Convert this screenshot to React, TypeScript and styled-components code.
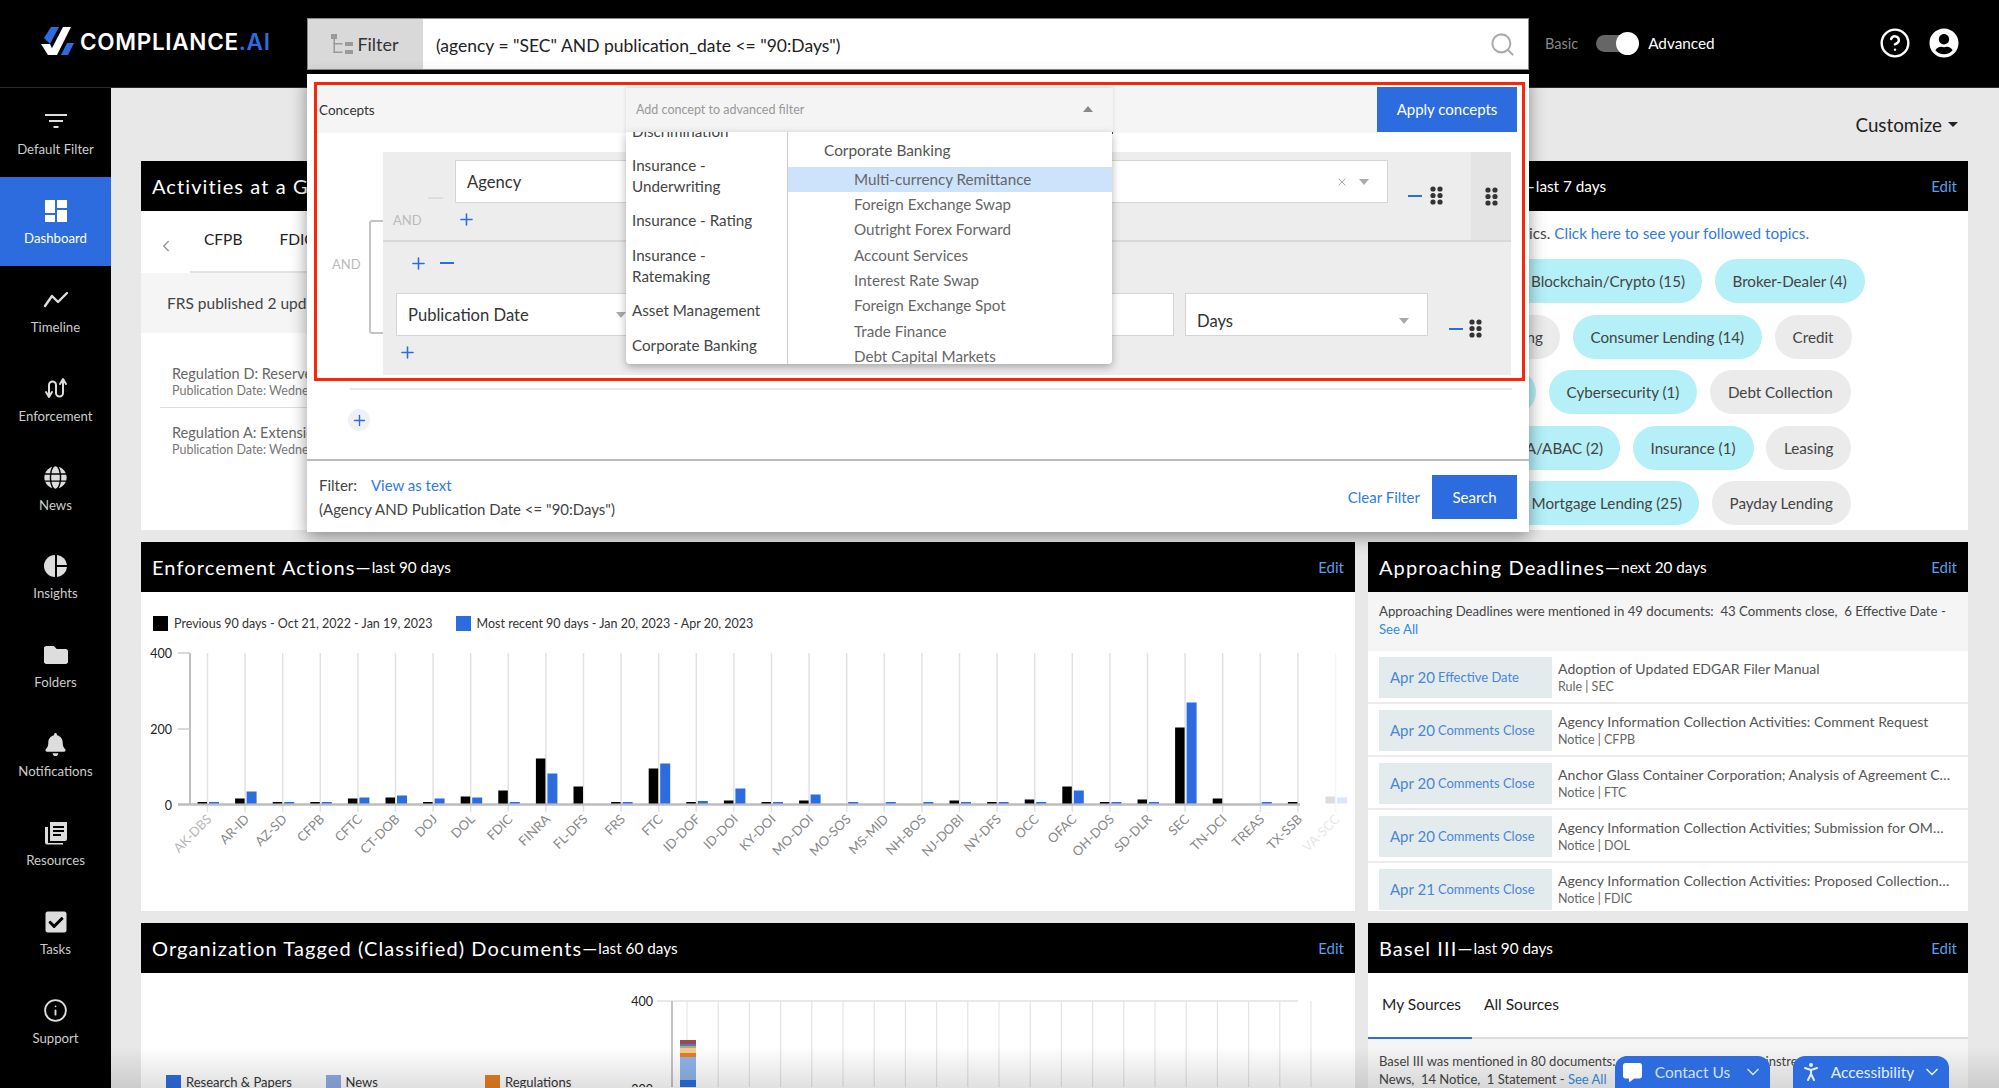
import styled, { createGlobalStyle } from 'styled-components'
import { ChevronDown, ChevronLeft, CircleHelp, Info, PersonStanding, Plus, Search, X } from 'lucide-react'
import { FaBell, FaCheckSquare, FaCommentAlt, FaFolder, FaGlobe, FaUserCircle } from 'react-icons/fa'

const BLUE = '#2d6cdf'
const LINK = '#2f7be6'

const GlobalStyle = createGlobalStyle`
	html, body {
		margin: 0;
		height: 100%;
		overflow: hidden;
		background: #e8e8e8;
		font-family: Lato, "Noto Sans", sans-serif;
		color: #333;
	}
	* { box-sizing: border-box; }
`

/* ---------- icons ---------- */

const LogoMark = () => (
	<svg width="33" height="29" viewBox="0 0 33 29">
		<polygon points="10,0 18,0 9,17 3,11" fill={BLUE} />
		<polygon points="22,0 30,0 16,28 14,28 10,23" fill="#fff" />
		<polygon points="0,17 9,17 14,28 7,28" fill="#fff" />
		<polygon points="26,16 33,16 27,28 20,28" fill={BLUE} />
	</svg>
)

const FilterTree = () => (
	<svg width="24" height="24" viewBox="0 0 24 24" fill="#9a9a9a">
		<rect x="1" y="2" width="6" height="5" />
		<rect x="15" y="10" width="8" height="4" />
		<rect x="15" y="18" width="8" height="4" />
		<rect x="3.5" y="7" width="1.5" height="14" />
		<rect x="3.5" y="11" width="9" height="1.5" />
		<rect x="3.5" y="19.5" width="9" height="1.5" />
	</svg>
)

const Grip = () => (
	<svg width="13" height="19" viewBox="0 0 13 19" fill="#333">
		{[3, 9.5, 16].map(y => [3, 10].map(x => <circle key={`${x}-${y}`} cx={x} cy={y} r="2.6" />))}
	</svg>
)

const FilterLines = () => (
	<svg width="24" height="20" viewBox="0 0 24 20" stroke="#ddd" strokeWidth="2">
		<line x1="1" y1="3" x2="23" y2="3" />
		<line x1="5" y1="9" x2="19" y2="9" />
		<line x1="9.5" y1="15" x2="14.5" y2="15" />
	</svg>
)

const DashboardIcon = () => (
	<svg width="24" height="24" viewBox="0 0 24 24" fill="#fff">
		<rect x="1" y="1" width="10" height="13" />
		<rect x="13" y="1" width="10" height="8" />
		<rect x="1" y="16" width="10" height="7" />
		<rect x="13" y="11" width="10" height="12" />
	</svg>
)

const TimelineIcon = () => (
	<svg width="28" height="20" viewBox="0 0 28 20" fill="none" stroke="#ddd" strokeWidth="2.4" strokeLinecap="round" strokeLinejoin="round">
		<polyline points="3,16 10,6 16,12 25,3" />
	</svg>
)

const EnforcementIcon = () => (
	<svg width="24" height="24" viewBox="0 0 24 24" fill="none" stroke="#ddd" strokeWidth="2" strokeLinecap="round" strokeLinejoin="round">
		<path d="M5 18V8a3.5 3.5 0 0 1 7 0v8a3.5 3.5 0 0 0 7 0V4" />
		<polyline points="2,15 5,20 8,15" />
		<polyline points="16,7 19,2 22,7" />
	</svg>
)

const PieIcon = () => (
	<svg width="24" height="24" viewBox="0 0 24 24" fill="#ddd">
		<path d="M11 1a11 11 0 0 0 0 22z" />
		<path d="M13 1a11 11 0 0 1 10 10H13z" />
		<path d="M13 13h10a11 11 0 0 1-10 10z" />
	</svg>
)

const ResourcesIcon = () => (
	<svg width="24" height="24" viewBox="0 0 24 24" fill="#ddd">
		<path d="M6 1h17v17a2 2 0 0 1-2 2H6zM9 5v2h11V5zm0 4v2h11V9zm0 4v2h8v-2z" fillRule="evenodd" />
		<path d="M1 6h3v16h15v1.500H3a2 2 0 0 1-2-2z" />
	</svg>
)

/* ---------- data ---------- */

const navItems = [
	{ label: 'Default Filter', icon: <FilterLines /> },
	{ label: 'Dashboard', icon: <DashboardIcon />, active: true },
	{ label: 'Timeline', icon: <TimelineIcon /> },
	{ label: 'Enforcement', icon: <EnforcementIcon /> },
	{ label: 'News', icon: <FaGlobe size={23} /> },
	{ label: 'Insights', icon: <PieIcon /> },
	{ label: 'Folders', icon: <FaFolder size={24} /> },
	{ label: 'Notifications', icon: <FaBell size={23} /> },
	{ label: 'Resources', icon: <ResourcesIcon /> },
	{ label: 'Tasks', icon: <FaCheckSquare size={24} /> },
	{ label: 'Support', icon: <Info size={25} strokeWidth={1.8} /> },
]

const enforcement: [string, number, number][] = [
	['AK-DBS', 1.5, 1.5], ['AR-ID', 5, 12], ['AZ-SD', 1.5, 1.5], ['CFPB', 1.5, 1.5], ['CFTC', 5, 6],
	['CT-DOB', 6, 8], ['DOJ', 1.5, 5], ['DOL', 7, 6], ['FDIC', 13, 1.5], ['FINRA', 45, 30],
	['FL-DFS', 17, 0], ['FRS', 1.5, 1.5], ['FTC', 35, 40], ['ID-DOF', 1.5, 2.5], ['ID-DOI', 3, 15],
	['KY-DOI', 1.5, 1.5], ['MO-DOI', 3, 9], ['MO-SOS', 0, 1.5], ['MS-MID', 0, 1.5], ['NH-BOS', 0, 1.5],
	['NJ-DOBI', 3, 1.5], ['NY-DFS', 1.5, 1.5], ['OCC', 4, 1.5], ['OFAC', 17, 13], ['OH-DOS', 1.5, 1.5],
	['SD-DLR', 4, 1.5], ['SEC', 76, 101], ['TN-DCI', 5, 0], ['TREAS', 0, 1.5], ['TX-SSB', 1.5, 0],
	['VA-SCC', 7, 6],
]

const deadlines = [
	{ date: 'Apr 20', kind: 'Effective Date', title: 'Adoption of Updated EDGAR Filer Manual', meta: 'Rule | SEC' },
	{ date: 'Apr 20', kind: 'Comments Close', title: 'Agency Information Collection Activities: Comment Request', meta: 'Notice | CFPB' },
	{ date: 'Apr 20', kind: 'Comments Close', title: 'Anchor Glass Container Corporation; Analysis of Agreement Containing Consent Orders', meta: 'Notice | FTC' },
	{ date: 'Apr 20', kind: 'Comments Close', title: 'Agency Information Collection Activities; Submission for OMB Review of Revised Forms', meta: 'Notice | DOL' },
	{ date: 'Apr 21', kind: 'Comments Close', title: 'Agency Information Collection Activities: Proposed Collection Renewal', meta: 'Notice | FDIC' },
]

const pillRows: { lead: string; leadWidth: number; leadGray?: boolean; rest: { label: string; gray?: boolean }[] }[] = [
	{ lead: 'Blockchain/Crypto (15)', leadWidth: 323, rest: [{ label: 'Broker-Dealer (4)' }] },
	{ lead: 'Community Banking', leadWidth: 181, leadGray: true, rest: [{ label: 'Consumer Lending (14)' }, { label: 'Credit', gray: true }] },
	{ lead: 'Crowdfunding (2)', leadWidth: 157, rest: [{ label: 'Cybersecurity (1)' }, { label: 'Debt Collection', gray: true }] },
	{ lead: 'FCPA/ABAC (2)', leadWidth: 241, rest: [{ label: 'Insurance (1)' }, { label: 'Leasing', gray: true }] },
	{ lead: 'Mortgage Lending (25)', leadWidth: 320, rest: [{ label: 'Payday Lending', gray: true }] },
]

const leftConcepts = ['Discrimination', 'Insurance - Underwriting', 'Insurance - Rating', 'Insurance - Ratemaking', 'Asset Management', 'Corporate Banking']
const rightConcepts = ['Multi-currency Remittance', 'Foreign Exchange Swap', 'Outright Forex Forward', 'Account Services', 'Interest Rate Swap', 'Foreign Exchange Spot', 'Trade Finance', 'Debt Capital Markets']

/* ---------- charts ---------- */

const EnforcementChart = () => {
	const base = 804
	return (
		<svg width="1214" height="273" viewBox="141 640 1214 273">
			{enforcement.map((_, i) => {
				const x = 207.5 + 37.6 * i
				return <line key={i} x1={x} x2={x} y1="653" y2="812" stroke="#e2e2e2" strokeWidth="1.5" opacity={i === 30 ? 0.3 : 1} />
			})}
			<line x1="190" x2="190" y1="653" y2="805" stroke="#bdbdbd" strokeWidth="2" />
			<line x1="178" x2="190" y1="653" y2="653" stroke="#ccc" strokeWidth="1.5" />
			<line x1="178" x2="190" y1="729" y2="729" stroke="#ccc" strokeWidth="1.5" />
			<line x1="178" x2="1300" y1="804.5" y2="804.5" stroke="#bdbdbd" strokeWidth="2.5" />
			<text x="172" y="658" textAnchor="end" fontSize="12.5" fill="#222">400</text>
			<text x="172" y="734" textAnchor="end" fontSize="12.5" fill="#222">200</text>
			<text x="172" y="810" textAnchor="end" fontSize="12.5" fill="#222">0</text>
			{enforcement.map(([name, black, blue], i) => {
				const x = 207.5 + 37.6 * i
				const faded = i === 30
				return (
					<g key={name}>
						{black > 0 && <rect x={x - 10} y={base - 0.5 - black} width="9.500" height={black} fill={faded ? '#ddd' : '#000'} />}
						{blue > 0 && <rect x={x + 1.5} y={base - 0.5 - blue} width="10" height={blue} fill={faded ? '#dbe6fa' : BLUE} />}
						<text
							x={x + 5}
							y="820"
							textAnchor="end"
							fontSize="13"
							fill="#888"
							opacity={faded ? 0.2 : i === 0 ? 0.6 : 1}
							transform={`rotate(-45 ${x + 5} 820)`}
						>
							{name}
						</text>
					</g>
				)
			})}
		</svg>
	)
}

const TaggedChart = () => {
	const segs: [number, number, string][] = [
		[1041, 4, '#8f4f4f'], [1045, 2, '#8e5bc0'], [1047, 2, '#7cc47c'], [1049, 5, '#fbc58e'],
		[1054, 4, '#e67e22'], [1058, 23, '#8fb3ea'], [1081, 7, BLUE],
	]
	return (
		<svg width="734" height="114" viewBox="621 974 734 114">
			<line x1="657" x2="1298" y1="1002" y2="1002" stroke="#e9e9e9" strokeWidth="2" />
			{Array.from({ length: 21 }, (_, i) => (
				<line key={i} x1={687 + 31.2 * i} x2={687 + 31.2 * i} y1="1002" y2="1088" stroke="#e4e4e4" strokeWidth="1.2" />
			))}
			<line x1="672" x2="672" y1="1002" y2="1088" stroke="#c4c4c4" strokeWidth="2" />
			<text x="653" y="1007" textAnchor="end" fontSize="12.5" fill="#222">400</text>
			<text x="653" y="1095" textAnchor="end" fontSize="12.5" fill="#222">200</text>
			{segs.map(([y, h, c]) => <rect key={y} x="680" y={y} width="16" height={h} fill={c} />)}
		</svg>
	)
}

/* ---------- component ---------- */

const App = () => {
	return (
		<Page>
			<GlobalStyle />
			<Header>
				<Logo>
					<LogoMark />
					<LogoText>COMPLIANCE<span>.AI</span></LogoText>
				</Logo>
				<SearchWrap>
					<SearchBar>
						<FilterButton><FilterTree />Filter</FilterButton>
						<Query>(agency = "SEC" AND publication_date &lt;= "90:Days")</Query>
						<Search size={27} color="#aaa" strokeWidth={1.8} />
					</SearchBar>
					<FilterPanel>
						<RedFrame>
							<ConceptBar>
								<ConceptLabel>Concepts</ConceptLabel>
								<ConceptSelect>
									Add concept to advanced filter
									<TriUp />
									<ConceptMenu>
										<LeftList>
											<LeftInner>
												{leftConcepts.map(c => <LeftItem key={c}>{c}</LeftItem>)}
											</LeftInner>
										</LeftList>
										<RightList>
											<RightHeading>Corporate Banking</RightHeading>
											{rightConcepts.map((c, i) => <RightItem key={c} $active={i === 0}>{c}</RightItem>)}
										</RightList>
									</ConceptMenu>
								</ConceptSelect>
								<ApplyButton>Apply concepts</ApplyButton>
							</ConceptBar>
							<Builder>
								<AndColumn>
									<OuterAnd>AND</OuterAnd>
									<Bracket />
								</AndColumn>
								<OuterGroup>
									<AgencyGroup>
										<AgencyMain>
											<AgencyRow>
												<FaintDash />
												<FieldBox $width={933}>
													Agency
													<SelectEnd>
														<X size={12} color="#aaa" />
														<TriDown />
													</SelectEnd>
												</FieldBox>
												<RowTools><MinusMark /><Grip /></RowTools>
											</AgencyRow>
											<SubRow>
												<InnerAnd>AND</InnerAnd>
												<Plus size={19} color={BLUE} strokeWidth={2} />
											</SubRow>
										</AgencyMain>
										<Handle><Grip /></Handle>
									</AgencyGroup>
									<DateGroup>
										<AddRow>
											<Plus size={19} color={BLUE} strokeWidth={2} />
											<MinusMark />
										</AddRow>
										<DateRow>
											<FieldBox $width={249}>
												Publication Date
												<SelectEnd><TriDown /></SelectEnd>
											</FieldBox>
											<FieldBox $width={518} />
											<FieldBox $width={243} $low>
												Days
												<SelectEnd><TriDown /></SelectEnd>
											</FieldBox>
											<RowTools><MinusMark /><Grip /></RowTools>
										</DateRow>
										<LastPlus><Plus size={19} color={BLUE} strokeWidth={2} /></LastPlus>
									</DateGroup>
								</OuterGroup>
							</Builder>
						</RedFrame>
						<AddZone>
							<RoundPlus><Plus size={17} color={BLUE} strokeWidth={2} /></RoundPlus>
						</AddZone>
						<PanelFooter>
							<FilterSummary>
								<div>Filter: <ViewLink>View as text</ViewLink></div>
								<div>(Agency AND Publication Date &lt;= "90:Days")</div>
							</FilterSummary>
							<ClearLink>Clear Filter</ClearLink>
							<SearchButton>Search</SearchButton>
						</PanelFooter>
					</FilterPanel>
				</SearchWrap>
				<ModeSwitch>
					<ModeLabel>Basic</ModeLabel>
					<Toggle><Knob /></Toggle>
					<ModeLabel $on>Advanced</ModeLabel>
				</ModeSwitch>
				<HeaderIcons>
					<CircleHelp size={32} strokeWidth={1.8} color="#fff" />
					<FaUserCircle size={30} color="#fff" />
				</HeaderIcons>
			</Header>
			<Body>
				<Sidebar>
					{navItems.map(item => (
						<NavItem key={item.label} $active={item.active}>
							<NavIcon>{item.icon}</NavIcon>
							{item.label}
						</NavItem>
					))}
				</Sidebar>
				<Main>
					<CustomizeRow>Customize<Caret /></CustomizeRow>
					<Cards>
						<Card>
							<CardHeader>
								<CardTitle>Activities at a Glance</CardTitle>
							</CardHeader>
							<TabsRow>
								<TabArrow><ChevronLeft size={18} color="#999" /></TabArrow>
								<TabsLine>
									<GlanceTab>CFPB</GlanceTab>
									<GlanceTab>FDIC</GlanceTab>
								</TabsLine>
							</TabsRow>
							<GlanceIntro>FRS published 2 updates in the last 7 days</GlanceIntro>
							<GlanceItem>
								<GlanceTitle>Regulation D: Reserve Requirements of Depository Institutions</GlanceTitle>
								<GlanceDate>Publication Date: Wednesday, April 12, 2023</GlanceDate>
							</GlanceItem>
							<GlanceItem>
								<GlanceTitle>Regulation A: Extensions of Credit by Federal Reserve Banks</GlanceTitle>
								<GlanceDate>Publication Date: Wednesday, April 5, 2023</GlanceDate>
							</GlanceItem>
						</Card>
						<Card>
							<CardHeader>
								<CardTitle>News by Topic</CardTitle>
								<Dash>—</Dash>
								<CardSub>last 7 days</CardSub>
								<EditLink>Edit</EditLink>
							</CardHeader>
							<TopicsIntro>Showing news across your topics. <TopicLink>Click here to see your followed topics.</TopicLink></TopicsIntro>
							<PillStack>
								{pillRows.map(row => (
									<PillRow key={row.lead}>
										<Pill $gray={row.leadGray} $width={row.leadWidth}>{row.lead}</Pill>
										{row.rest.map(p => <Pill key={p.label} $gray={p.gray}>{p.label}</Pill>)}
									</PillRow>
								))}
							</PillStack>
						</Card>
						<Card>
							<CardHeader>
								<CardTitle>Enforcement Actions</CardTitle>
								<Dash>—</Dash>
								<CardSub>last 90 days</CardSub>
								<EditLink>Edit</EditLink>
							</CardHeader>
							<ChartLegend>
								<LegendEntry><Swatch $color="#000" />Previous 90 days - Oct 21, 2022 - Jan 19, 2023</LegendEntry>
								<LegendEntry><Swatch $color={BLUE} />Most recent 90 days - Jan 20, 2023 - Apr 20, 2023</LegendEntry>
							</ChartLegend>
							<EnforcementChart />
						</Card>
						<Card>
							<CardHeader>
								<CardTitle>Approaching Deadlines</CardTitle>
								<Dash>—</Dash>
								<CardSub>next 20 days</CardSub>
								<EditLink>Edit</EditLink>
							</CardHeader>
							<DeadlineIntro>
								Approaching Deadlines were mentioned in 49 documents:&nbsp; 43 Comments close,&nbsp; 6 Effective Date -<br />
								<SeeAll>See All</SeeAll>
							</DeadlineIntro>
							{deadlines.map(d => (
								<DeadlineRow key={d.title}>
									<DateBox>
										<DateDay>{d.date}</DateDay>
										<DateKind>{d.kind}</DateKind>
									</DateBox>
									<DeadlineInfo>
										<DeadlineTitle>{d.title}</DeadlineTitle>
										<DeadlineMeta>{d.meta}</DeadlineMeta>
									</DeadlineInfo>
								</DeadlineRow>
							))}
						</Card>
						<Card>
							<CardHeader>
								<CardTitle>Organization Tagged (Classified) Documents</CardTitle>
								<Dash>—</Dash>
								<CardSub>last 60 days</CardSub>
								<EditLink>Edit</EditLink>
							</CardHeader>
							<TaggedBody>
								<TaggedLegend>
									<TaggedEntry><Swatch $color={BLUE} />Research &amp; Papers</TaggedEntry>
									<TaggedEntry><Swatch $color="#8fabe3" />News</TaggedEntry>
									<TaggedEntry><Swatch $color="#e67e22" />Regulations</TaggedEntry>
								</TaggedLegend>
								<TaggedChart />
							</TaggedBody>
						</Card>
						<Card>
							<CardHeader>
								<CardTitle>Basel III</CardTitle>
								<Dash>—</Dash>
								<CardSub>last 90 days</CardSub>
								<EditLink>Edit</EditLink>
							</CardHeader>
							<SourceTabs>
								<SourceTab $active>My Sources</SourceTab>
								<SourceTab>All Sources</SourceTab>
							</SourceTabs>
							<BaselText>
								Basel III was mentioned in 80 documents:&nbsp; 18 Enforcements,&nbsp; 21 Mainstream Media,&nbsp; 44<br />
								News,&nbsp; 14 Notice,&nbsp; 1 Statement - <SeeAll>See All</SeeAll>
							</BaselText>
						</Card>
					</Cards>
				</Main>
			</Body>
			<BottomFade />
			<Widgets>
				<ContactWidget>
					<FaCommentAlt size={19} color="#fff" />
					<span>Contact Us</span>
					<ChevronDown size={20} />
				</ContactWidget>
				<AccessWidget>
					<PersonStanding size={24} />
					<span>Accessibility</span>
					<ChevronDown size={20} />
				</AccessWidget>
			</Widgets>
		</Page>
	)
}

export default App

const Page = styled.div`
	position: relative;
	width: 100%;
	height: 100vh;
	overflow: hidden;
	display: flex;
	flex-direction: column;
`

const Header = styled.header`
	position: relative;
	z-index: 5;
	flex: none;
	height: 88px;
	background: #000;
	padding-top: 18px;
	display: flex;
	align-items: flex-start;
	border-bottom: 1px solid #2a2a2a;
`

const Logo = styled.div`
	width: 307px;
	height: 47px;
	padding-left: 41px;
	display: flex;
	align-items: center;
	gap: 6px;
`

const LogoText = styled.div`
	font-family: Inter, sans-serif;
	font-weight: 600;
	font-size: 22.5px;
	letter-spacing: 0.7px;
	color: #fff;
	span { color: ${BLUE}; }
`

const SearchWrap = styled.div`
	position: relative;
	width: 1222px;
`

const SearchBar = styled.div`
	height: 52px;
	background: #fff;
	display: flex;
	align-items: center;
	padding-right: 12px;
	border: 1px solid #888;
`

const FilterButton = styled.div`
	width: 115px;
	height: 100%;
	padding-right: 2px;
	background: #d9d9d9;
	display: flex;
	align-items: center;
	justify-content: center;
	gap: 3px;
	font-size: 18px;
	color: #333;
`

const Query = styled.div`
	flex: 1;
	padding: 3px 0 0 13px;
	font-size: 17.5px;
	color: #222;
`

const FilterPanel = styled.div`
	position: absolute;
	left: 0;
	top: 56px;
	width: 100%;
	height: 458px;
	background: #fff;
	box-shadow: 0 5px 16px rgba(0, 0, 0, 0.4);
	padding-top: 8px;
`

const RedFrame = styled.div`
	margin: 0 4px 0 7px;
	height: 299px;
	border: 3px solid #f9260a;
	padding: 2px 5px 0 0;
`

const ConceptBar = styled.div`
	height: 46px;
	background: #f5f5f5;
	display: flex;
	align-items: center;
	font-size: 13.5px;
`

const ConceptLabel = styled.div`
	width: 309px;
	padding-left: 2px;
	color: #333;
`

const ConceptSelect = styled.div`
	position: relative;
	width: 487px;
	height: 46px;
	margin-top: 1px;
	background: #f4f4f4;
	border-bottom: 2px solid #444;
	box-shadow: 0 -1px 4px rgba(0, 0, 0, 0.12);
	padding-left: 10px;
	display: flex;
	align-items: center;
	font-size: 12.500px;
	color: #999;
`

const TriUp = styled.i`
	position: absolute;
	right: 20px;
	top: 18px;
	border: 5px solid transparent;
	border-top: 0;
	border-bottom: 6px solid #888;
`

const ConceptMenu = styled.div`
	position: absolute;
	left: 0;
	top: 100%;
	width: 486px;
	height: 232px;
	background: #fff;
	border-radius: 0 0 4px 4px;
	box-shadow: 0 3px 8px rgba(0, 0, 0, 0.3);
	display: flex;
	overflow: hidden;
	z-index: 3;
`

const LeftList = styled.div`
	width: 162px;
	flex: none;
	overflow: hidden;
	border-right: 1px solid #ccc;
	padding: 0 14px 0 6px;
`

const LeftInner = styled.div`
	margin-top: -11px;
	display: flex;
	flex-direction: column;
	gap: 14.2px;
`

const LeftItem = styled.div`
	font-size: 15.2px;
	line-height: 20.5px;
	color: #444;
`

const RightList = styled.div`
	flex: 1;
	padding-top: 5px;
	overflow: hidden;
`

const RightHeading = styled.div`
	height: 26px;
	margin-bottom: 4px;
	padding-left: 36px;
	font-size: 15.4px;
	line-height: 26px;
	color: #555;
`

const RightItem = styled.div<{ $active?: boolean }>`
	height: 25.4px;
	padding-left: 66px;
	font-size: 15.2px;
	line-height: 25.4px;
	color: #666;
	background: ${p => (p.$active ? '#cde3fb' : 'transparent')};
`

const ApplyButton = styled.button`
	margin-left: auto;
	width: 140px;
	height: 45px;
	margin-top: -2px;
	border: 0;
	background: ${BLUE};
	color: #fff;
	font: 15px Lato, sans-serif;
`

const Builder = styled.div`
	display: flex;
	margin: 19px 6px 0 0;
`

const AndColumn = styled.div`
	width: 66px;
	height: 223px;
	flex: none;
	display: flex;
`

const OuterAnd = styled.div`
	flex: 1;
	align-self: center;
	padding-left: 15px;
	font-size: 13px;
	color: #bbb;
`

const Bracket = styled.div`
	width: 14px;
	height: 114px;
	margin-top: 68px;
	border: 2px solid #c4c4c4;
	border-right: 0;
	border-radius: 3px 0 0 3px;
`

const OuterGroup = styled.div`
	flex: 1;
	height: 223px;
	background: #ededed;
`

const AgencyGroup = styled.div`
	height: 90px;
	display: flex;
	border-bottom: 2px solid #d8d8d8;
`

const AgencyMain = styled.div`
	flex: 1;
`

const AgencyRow = styled.div`
	padding: 8px 0 0 45px;
	display: flex;
`

const FaintDash = styled.i`
	width: 15px;
	height: 2px;
	margin: 37px 12px 0 0;
	background: #ddd;
`

const FieldBox = styled.div<{ $width: number; $low?: boolean }>`
	position: relative;
	width: ${p => p.$width}px;
	height: 43px;
	flex: none;
	background: #fff;
	border: 1.5px solid #d4d4d4;
	padding: ${p => (p.$low ? '13px' : '1px')} 0 0 11px;
	display: flex;
	align-items: center;
	font-size: 16.6px;
	color: #333;
`

const SelectEnd = styled.div`
	margin-left: auto;
	padding-right: 18px;
	display: flex;
	align-items: center;
	gap: 11px;
`

const TriDown = styled.i`
	border: 5px solid transparent;
	border-bottom: 0;
	border-top: 6px solid #aaa;
`

const RowTools = styled.div`
	display: flex;
	align-items: center;
	gap: 8px;
	height: 19px;
	margin: 26px 0 0 20px;
`

const MinusMark = styled.i`
	display: block;
	width: 14px;
	height: 2px;
	background: ${BLUE};
`

const SubRow = styled.div`
	padding: 5px 0 0 10px;
	display: flex;
	align-items: center;
`

const InnerAnd = styled.div`
	width: 64px;
	font-size: 13px;
	color: #bbb;
`

const Handle = styled.div`
	width: 40px;
	flex: none;
	background: #e4e4e4;
	display: flex;
	justify-content: center;
	padding-top: 35px;
`

const DateGroup = styled.div`
	padding-top: 11px;
`

const AddRow = styled.div`
	padding-left: 26px;
	height: 20px;
	display: flex;
	align-items: center;
	gap: 12px;
`

const DateRow = styled.div`
	margin-top: 20px;
	padding-left: 13px;
	display: flex;
	gap: 11px;
	${RowTools} {
		margin-left: 10px;
		gap: 6px;
	}
`

const LastPlus = styled.div`
	padding: 5px 0 0 15px;
`

const AddZone = styled.div`
	height: 71px;
	margin: 7px 17px 0 43px;
	border-top: 2px solid #e8e8e8;
	padding-top: 19px;
`

const RoundPlus = styled.div`
	width: 22px;
	height: 22px;
	margin-left: -2px;
	border-radius: 50%;
	background: #eef1f5;
	display: flex;
	align-items: center;
	justify-content: center;
`

const PanelFooter = styled.div`
	height: 73px;
	border-top: 2px solid #bbb;
	display: flex;
	align-items: center;
	padding: 0 12px 0 12px;
`

const FilterSummary = styled.div`
	flex: 1;
	font-size: 15px;
	line-height: 24px;
	color: #444;
`

const ViewLink = styled.a`
	margin-left: 10px;
	color: ${LINK};
`

const ClearLink = styled.a`
	margin-right: 12px;
	font-size: 15px;
	color: ${LINK};
`

const SearchButton = styled.button`
	width: 85px;
	height: 44px;
	border: 0;
	background: ${BLUE};
	color: #fff;
	font: 15px Lato, sans-serif;
`

const ModeSwitch = styled.div`
	height: 50px;
	margin-left: 16px;
	display: flex;
	align-items: center;
`

const ModeLabel = styled.div<{ $on?: boolean }>`
	font-size: ${p => (p.$on ? '15.3px' : '14.5px')};
	color: ${p => (p.$on ? '#fff' : '#888')};
`

const Toggle = styled.div`
	position: relative;
	width: 42px;
	height: 17px;
	margin: 0 10px 0 18px;
	border-radius: 9px;
	background: #666;
`

const Knob = styled.i`
	position: absolute;
	right: -1px;
	top: -3px;
	width: 23px;
	height: 23px;
	border-radius: 50%;
	background: #fff;
`

const HeaderIcons = styled.div`
	height: 50px;
	margin-left: 164px;
	display: flex;
	align-items: center;
	gap: 18px;
`

const Body = styled.div`
	flex: 1;
	min-height: 0;
	display: flex;
`

const Sidebar = styled.nav`
	width: 111px;
	flex: none;
	background: #000;
`

const NavItem = styled.div<{ $active?: boolean }>`
	height: 88.9px;
	display: flex;
	flex-direction: column;
	align-items: center;
	padding-top: 19px;
	font-size: 13.2px;
	color: ${p => (p.$active ? '#fff' : '#ccc')};
	background: ${p => (p.$active ? BLUE : 'transparent')};
`

const NavIcon = styled.div`
	height: 30px;
	margin-bottom: 4px;
	display: flex;
	align-items: center;
	justify-content: center;
	color: #ddd;
`

const Main = styled.main`
	flex: 1;
	min-width: 0;
	padding: 0 31px 0 30px;
`

const CustomizeRow = styled.div`
	height: 73px;
	padding: 25px 10px 0 0;
	display: flex;
	justify-content: flex-end;
	align-items: flex-start;
	font-size: 18.8px;
	color: #222;
`

const Caret = styled.i`
	margin: 9px 0 0 6px;
	border: 5px solid transparent;
	border-bottom: 0;
	border-top: 5px solid #222;
`

const Cards = styled.div`
	display: grid;
	grid-template-columns: 1214px 600px;
	grid-auto-rows: 369px;
	column-gap: 13px;
	row-gap: 12px;
`

const Card = styled.section`
	background: #fff;
	overflow: hidden;
	min-width: 0;
`

const CardHeader = styled.div`
	height: 50px;
	padding: 0 11px 1px 11px;
	background: #000;
	color: #fff;
	display: flex;
	align-items: center;
`

const CardTitle = styled.div`
	font-size: 20px;
	letter-spacing: 1.1px;
	white-space: nowrap;
`

const Dash = styled.span`
	margin: 0 1px 0 0;
	font-size: 19px;
`

const CardSub = styled.span`
	font-size: 15.3px;
`

const EditLink = styled.a`
	margin-left: auto;
	font-size: 15px;
	color: #5a9fe8;
`

const TabsRow = styled.div`
	height: 62px;
	display: flex;
`

const TabArrow = styled.div`
	width: 49px;
	padding: 26px 0 0 16px;
`

const TabsLine = styled.div`
	flex: 1;
	display: flex;
	gap: 37px;
	padding: 19px 0 0 14px;
	border-bottom: 2px solid #e2e2e2;
`

const GlanceTab = styled.div`
	font-size: 15.5px;
	color: #222;
`

const GlanceIntro = styled.div`
	height: 60px;
	padding-left: 26px;
	background: #f5f5f5;
	display: flex;
	align-items: center;
	font-size: 15.5px;
	color: #444;
`

const GlanceItem = styled.div`
	margin: 0 0 0 19px;
	padding: 32px 0 9px 12px;
	& + & {
		padding-top: 16px;
		border-top: 1px solid #ddd;
	}
`

const GlanceTitle = styled.div`
	font-size: 14.5px;
	color: #666;
	white-space: nowrap;
`

const GlanceDate = styled.div`
	margin-top: 1px;
	font-size: 12.500px;
	color: #777;
	white-space: nowrap;
`

const TopicsIntro = styled.div`
	height: 44px;
	margin-bottom: 4px;
	padding-right: 159px;
	display: flex;
	justify-content: flex-end;
	align-items: center;
	gap: 4px;
	font-size: 15.3px;
	color: #444;
	white-space: nowrap;
`

const TopicLink = styled.a`
	color: ${LINK};
`

const PillStack = styled.div`
	padding-left: 11px;
	display: flex;
	flex-direction: column;
	gap: 11.5px;
`

const PillRow = styled.div`
	display: flex;
	gap: 12.5px;
`

const Pill = styled.div<{ $gray?: boolean; $width?: number }>`
	height: 44px;
	padding: 0 18px;
	border-radius: 22px;
	display: flex;
	align-items: center;
	justify-content: flex-end;
	white-space: nowrap;
	overflow: hidden;
	font-size: 15.2px;
	color: #444;
	background: ${p => (p.$gray ? '#ebebeb' : '#b5f0f8')};
	${p => p.$width && `width: ${p.$width}px; flex: none; padding-right: 17px;`}
`

const ChartLegend = styled.div`
	height: 48px;
	padding: 22px 0 0 12px;
	display: flex;
	gap: 23px;
`

const LegendEntry = styled.div`
	display: flex;
	align-items: center;
	height: 18px;
	gap: 6px;
	font-size: 12.5px;
	color: #333;
`

const Swatch = styled.i<{ $color: string }>`
	width: 15px;
	height: 15px;
	flex: none;
	background: ${p => p.$color};
`

const DeadlineIntro = styled.div`
	height: 59px;
	padding: 10px 11px 0;
	background: #f5f5f5;
	font-size: 13.2px;
	line-height: 18px;
	color: #444;
`

const SeeAll = styled.a`
	color: #2f8be6;
`

const DeadlineRow = styled.div`
	height: 53px;
	padding: 6px 17px 0 11px;
	display: flex;
	gap: 6px;
	border-bottom: 2px solid #ececec;
`

const DateBox = styled.div`
	width: 173px;
	height: 41px;
	flex: none;
	padding: 0 0 1px 11px;
	background: #e3ebec;
	display: flex;
	align-items: center;
	gap: 3px;
	color: #4a86d8;
	white-space: nowrap;
`

const DateDay = styled.span`
	font-size: 15px;
`

const DateKind = styled.span`
	font-size: 13px;
`

const DeadlineInfo = styled.div`
	min-width: 0;
	flex: 1;
	padding-top: 2px;
`

const DeadlineTitle = styled.div`
	font-size: 14.1px;
	line-height: 20px;
	color: #555;
	white-space: nowrap;
	overflow: hidden;
	text-overflow: ellipsis;
`

const DeadlineMeta = styled.div`
	font-size: 12.500px;
	line-height: 16px;
	color: #666;
`

const TaggedBody = styled.div`
	display: flex;
`

const TaggedLegend = styled.div`
	width: 480px;
	flex: none;
	padding: 102px 0 0 25px;
	display: flex;
	align-items: flex-start;
`

const TaggedEntry = styled.div`
	width: 159.5px;
	flex: none;
	display: flex;
	gap: 5px;
	font-size: 13px;
	line-height: 15px;
	color: #333;
`

const SourceTabs = styled.div`
	height: 66px;
	display: flex;
	border-bottom: 2px solid #ddd;
`

const SourceTab = styled.div<{ $active?: boolean }>`
	width: ${p => (p.$active ? '104px' : 'auto')};
	margin: 0 ${p => (p.$active ? '0' : '12px')} -2px ${p => (p.$active ? '0' : '12px')};
	padding: 22px 0 0 ${p => (p.$active ? '14px' : '0')};
	font-size: 15.5px;
	color: #222;
	border-bottom: 2px solid ${p => (p.$active ? BLUE : 'transparent')};
`

const BaselText = styled.div`
	padding: 13px 11px 20px;
	height: 100%;
	background: #f5f5f5;
	font-size: 13px;
	line-height: 18px;
	color: #444;
	white-space: nowrap;
`

const BottomFade = styled.div`
	position: absolute;
	left: 111px;
	right: 0;
	bottom: 0;
	height: 42px;
	background: linear-gradient(to bottom, rgba(0, 0, 0, 0), rgba(0, 0, 0, 0.12));
	pointer-events: none;
`

const Widgets = styled.div`
	position: absolute;
	right: 50px;
	bottom: 0;
	display: flex;
	gap: 23px;
`

const ContactWidget = styled.div`
	width: 155px;
	height: 32px;
	padding: 0 7px 0 8px;
	border-radius: 12px 12px 0 0;
	background: ${BLUE};
	color: #cfe0ff;
	display: flex;
	align-items: center;
	justify-content: space-between;
	font-size: 15.5px;
`

const AccessWidget = styled(ContactWidget)`
	width: 156px;
	color: #e4eeff;
	padding-left: 6px;
`
